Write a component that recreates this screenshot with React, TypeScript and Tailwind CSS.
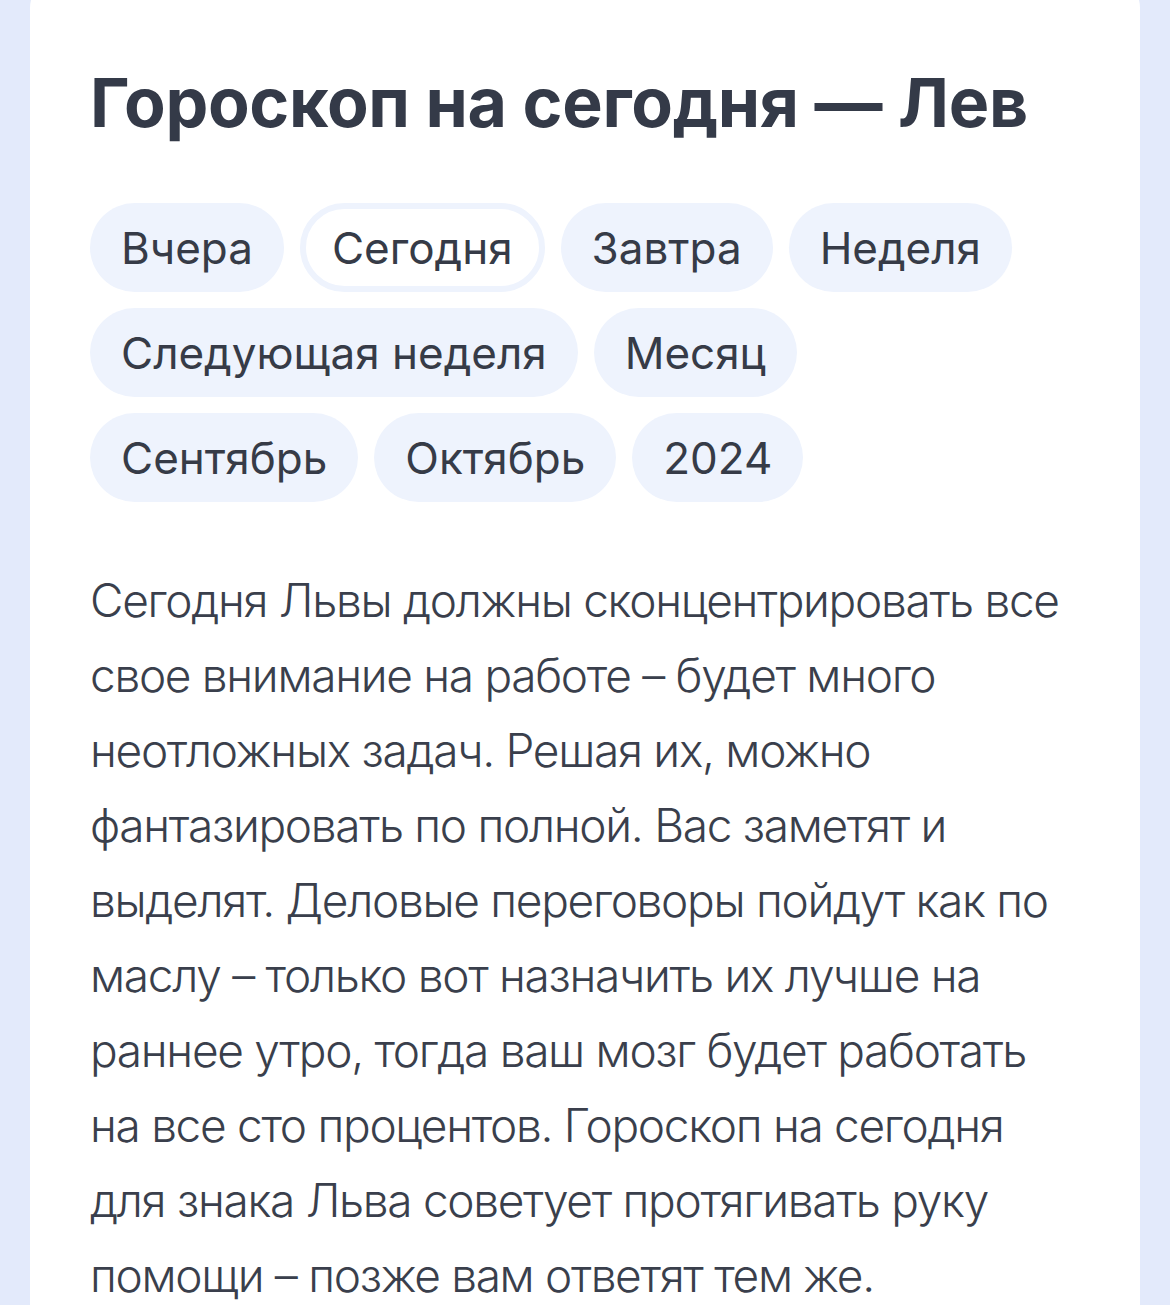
const periods = [
  "Вчера",
  "Сегодня",
  "Завтра",
  "Неделя",
  "Следующая неделя",
  "Месяц",
  "Сентябрь",
  "Октябрь",
  "2024",
];

export default function App() {
  return (
    <div className="h-[1305px] overflow-hidden bg-[#e3eafb] px-[30px] font-['Inter',sans-serif]">
      <div className="-mt-6 rounded-[32px] bg-white px-[60px] pt-[86px] pb-16">
        <h1 className="text-[68px] font-bold leading-[80px] tracking-[-0.3px] text-[#343a48]">
          Гороскоп на сегодня — Лев
        </h1>
        <div className="mt-[61px] flex flex-wrap gap-4 pr-10">
          {periods.map((p) =>
            p === "Сегодня" ? (
              <button
                key={p}
                type="button"
                className="flex h-[89px] items-center rounded-full border-[6px] border-[#eef3fd] bg-white px-[26px] text-[44px] text-[#363b47]"
              >
                {p}
              </button>
            ) : (
              <button
                key={p}
                type="button"
                className="flex h-[89px] items-center rounded-full bg-[#eef3fd] px-[31px] text-[44px] text-[#363b47]"
              >
                {p}
              </button>
            )
          )}
        </div>
        <p className="mt-[61px] text-[46px] leading-[75px] tracking-[-1.3px] font-light text-[#3a3f4c]">
          Сегодня Львы должны сконцентрировать все свое внимание на работе –
          будет много неотложных задач. Решая их, можно фантазировать по
          полной. Вас заметят и выделят. Деловые переговоры пойдут как по маслу
          – только вот назначить их лучше на раннее утро, тогда ваш мозг будет
          работать на все сто процентов. Гороскоп на сегодня для знака Льва
          советует протягивать руку помощи – позже вам ответят тем же.
        </p>
      </div>
    </div>
  );
}
